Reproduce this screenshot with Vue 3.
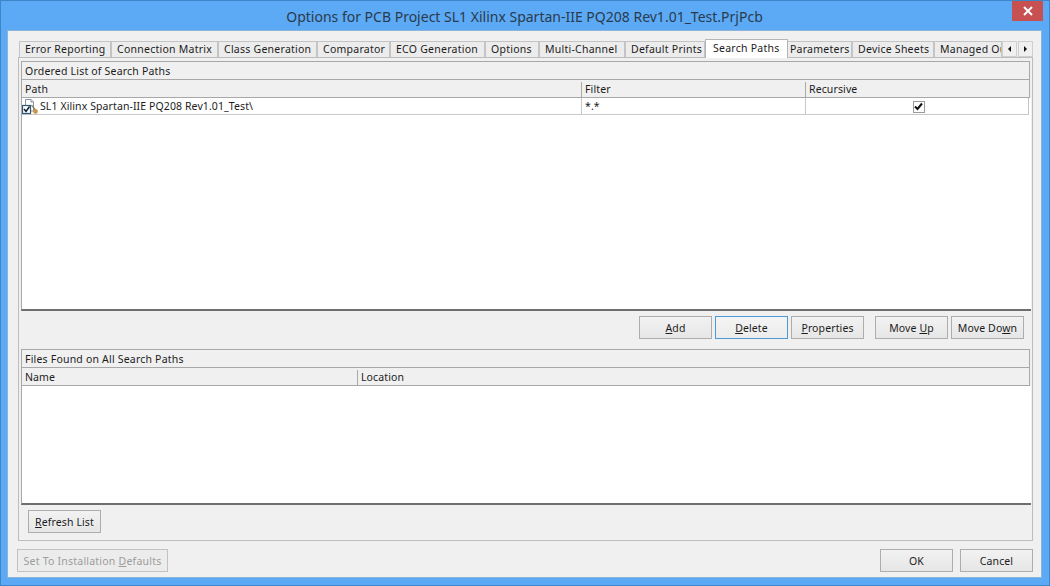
<script setup>
const tabs = [
  { label: "Error Reporting", width: 92 },
  { label: "Connection Matrix", width: 107 },
  { label: "Class Generation", width: 99 },
  { label: "Comparator", width: 73 },
  { label: "ECO Generation", width: 95 },
  { label: "Options", width: 54 },
  { label: "Multi-Channel", width: 86 },
  { label: "Default Prints", width: 80 },
  { label: "Search Paths", width: 83, active: true },
  { label: "Parameters", width: 64, afterActive: true },
  { label: "Device Sheets", width: 82 },
  { label: "Managed Output Jobs", width: 68 },
];
</script>

<template>
  <div class="window">
    <header class="titlebar">
      <span class="title">Options for PCB Project SL1 Xilinx Spartan-IIE PQ208 Rev1.01_Test.PrjPcb</span>
      <button class="close">
        <svg width="10" height="10" viewBox="0 0 10 10">
          <path d="M1 1 L9 9 M9 1 L1 9" stroke="#fff" stroke-width="2" />
        </svg>
      </button>
    </header>

    <main class="client">
      <nav class="tabs">
        <div
          v-for="tab in tabs"
          :key="tab.label"
          class="tab"
          :class="{ active: tab.active, 'after-active': tab.afterActive }"
          :style="{ width: tab.width + 'px' }"
        >
          <span>{{ tab.label }}</span>
        </div>
        <div class="scroller">
          <div class="arrow"><i class="left"></i></div>
          <div class="arrow"><i class="right"></i></div>
        </div>
      </nav>

      <section class="page">
        <div class="caption">Ordered List of Search Paths</div>
        <div class="cols paths head">
          <div class="cell">Path</div>
          <div class="cell sep">Filter</div>
          <div class="cell sep">Recursive</div>
        </div>
        <div class="list upper">
          <div class="cols paths row">
            <div class="cell path">
              <svg class="icon" width="17" height="16" viewBox="0 0 17 16">
                <path d="M3.5 .5 H9 L11.5 3 V12 H3.5 Z" fill="#fff" stroke="#8a93a0" />
                <path d="M9 .5 V3 H11.5" fill="#dfe4ea" stroke="#8a93a0" />
                <path d="M9.5 6 L13.5 11" stroke="#7d6a45" stroke-width="1.2" />
                <circle cx="13.5" cy="12.5" r="2.4" fill="#c79a4a" />
                <rect x=".5" y="6.5" width="8" height="8" fill="#fff" stroke="#2f5876" stroke-width="1.2" />
                <path d="M2 10 L4 12.5 L7.5 7.5" fill="none" stroke="#10202c" stroke-width="1.5" />
              </svg>
              <span>SL1 Xilinx Spartan-IIE PQ208 Rev1.01_Test\</span>
            </div>
            <div class="cell sep">*.*</div>
            <div class="cell sep center">
              <span class="check">
                <svg width="9" height="9" viewBox="0 0 9 9">
                  <path d="M1 4.5 L3.5 7 L8 1.5" fill="none" stroke="#111" stroke-width="2" />
                </svg>
              </span>
            </div>
          </div>
        </div>

        <div class="actions">
          <button class="btn"><u>A</u>dd</button>
          <button class="btn focus"><u>D</u>elete</button>
          <button class="btn"><u>P</u>roperties</button>
          <button class="btn gap">Move <u>U</u>p</button>
          <button class="btn">Move Do<u>w</u>n</button>
        </div>

        <div class="caption">Files Found on All Search Paths</div>
        <div class="cols files head">
          <div class="cell">Name</div>
          <div class="cell sep">Location</div>
        </div>
        <div class="list lower"></div>

        <div class="refresh">
          <button class="btn"><u>R</u>efresh List</button>
        </div>
      </section>

      <footer class="footer">
        <button class="btn wide" disabled>Set To Installation <u>D</u>efaults</button>
        <div class="confirm">
          <button class="btn">OK</button>
          <button class="btn">Cancel</button>
        </div>
      </footer>
    </main>
  </div>
</template>

<style scoped>
.window {
  width: 1050px;
  height: 586px;
  box-sizing: border-box;
  padding: 0 7px 7px 6px;
  background: #5caaf5;
  border: 1px solid #3d86c9;
  display: flex;
  flex-direction: column;
  font-family: "Noto Sans", "Open Sans", sans-serif;
  font-size: 10.5px;
  letter-spacing: 0.12px;
  color: #1c1c1c;
  overflow: hidden;
}
.titlebar {
  position: relative;
  height: 29px;
  flex: none;
  display: flex;
  align-items: center;
  justify-content: center;
}
.title {
  font-size: 14px;
  letter-spacing: 0;
  color: #2a3a4c;
  padding-top: 2px;
}
.close {
  position: absolute;
  top: -1px;
  right: -1px;
  width: 31px;
  height: 21px;
  padding: 0;
  border: 0;
  background: #c75050;
  display: flex;
  align-items: center;
  justify-content: center;
}
.client {
  flex: 1;
  display: flex;
  flex-direction: column;
  background: #f0f0f0;
  border: 1px solid #8db4d6;
  padding: 8px 9px 5px 10px;
  min-height: 0;
}
.tabs {
  height: 18px;
  flex: none;
  display: flex;
  align-items: flex-end;
  position: relative;
  z-index: 1;
  padding-left: 1px;
  letter-spacing: 0.25px;
}
.tab {
  box-sizing: border-box;
  height: 16px;
  flex: none;
  background: #ececec;
  border: 1px solid #c4c4c4;
  border-bottom: 0;
  overflow: hidden;
  white-space: nowrap;
  padding-left: 5px;
  line-height: 15px;
}
.tab.active {
  height: 19px;
  background: #fff;
  border-color: #b5b5b5;
  margin-bottom: -1px;
  line-height: 16px;
  padding-left: 7px;
}
.tab.after-active {
  border-left: 0;
  padding-left: 2px;
}
.scroller {
  position: absolute;
  left: 984px;
  bottom: 0;
  display: flex;
  gap: 1px;
}
.arrow {
  box-sizing: border-box;
  width: 15px;
  height: 16px;
  background: #f0f0f0;
  border: 1px solid #cfcfcf;
  display: flex;
  align-items: center;
  justify-content: center;
}
.arrow i {
  width: 0;
  height: 0;
  border-top: 3px solid transparent;
  border-bottom: 3px solid transparent;
}
.arrow .left {
  border-right: 3px solid #111;
}
.arrow .right {
  border-left: 3px solid #111;
}
.page {
  box-sizing: border-box;
  width: 1015px;
  height: 484px;
  flex: none;
  background: #f0f0f0;
  border: 1px solid #bdbdbd;
  padding: 3px 2px 0 2px;
  display: flex;
  flex-direction: column;
}
.caption {
  box-sizing: border-box;
  height: 19px;
  flex: none;
  background: #f0f0f0;
  border: 1px solid #a8a8a8;
  padding: 1px 0 0 3px;
  line-height: 17px;
  letter-spacing: 0.2px;
}
.cols {
  display: grid;
  flex: none;
  box-sizing: border-box;
}
.paths {
  grid-template-columns: 559px 224px 1fr;
}
.files {
  grid-template-columns: 335px 1fr;
}
.head {
  height: 18px;
  background: #f0f0f0;
  border: 1px solid #a8a8a8;
  border-top: 0;
}
.cell {
  padding-left: 3px;
  line-height: 17px;
  min-width: 0;
}
.head .cell {
  padding-top: 1px;
}
.head .sep {
  position: relative;
  padding-left: 4px;
}
.head .sep::before {
  content: "";
  position: absolute;
  left: 0;
  top: 2px;
  bottom: 1px;
  width: 1px;
  background: #a8a8a8;
}
.list {
  box-sizing: border-box;
  flex: none;
  background: #fff;
  border-left: 1px solid #a8a8a8;
  border-bottom: 2px solid #6e6e6e;
  margin-right: -1px;
}
.upper {
  height: 213px;
  padding-right: 2px;
}
.lower {
  height: 119px;
}
.row {
  height: 17px;
  border-right: 1px solid #c4c4c4;
  border-bottom: 1px solid #c9c9c9;
}
.row .sep {
  border-left: 1px solid #c9c9c9;
}
.path {
  display: flex;
  align-items: center;
  padding-left: 0;
  letter-spacing: 0.1px;
}
.icon {
  margin-right: 1px;
  flex: none;
}
.center {
  display: flex;
  align-items: center;
  justify-content: center;
}
.check {
  box-sizing: border-box;
  width: 12px;
  height: 12px;
  background: #fff;
  border: 1px solid #9a9a9a;
  display: flex;
  align-items: center;
  justify-content: center;
}
.actions {
  height: 38px;
  flex: none;
  box-sizing: border-box;
  padding: 5px 6px 0 0;
  display: flex;
  justify-content: flex-end;
  gap: 3px;
}
.btn {
  box-sizing: border-box;
  width: 73px;
  height: 23px;
  flex: none;
  padding: 0;
  background: linear-gradient(#f2f2f2, #e6e6e6);
  border: 1px solid #adadad;
  font: inherit;
  letter-spacing: inherit;
  color: #1c1c1c;
  white-space: nowrap;
}
.btn.focus {
  border-color: #4a9ad8;
  background: linear-gradient(#f4f4f4, #ececec);
}
.btn.gap {
  margin-left: 8px;
}
.refresh {
  padding: 5px 0 0 7px;
}
.footer {
  margin-top: 8px;
  display: flex;
  justify-content: space-between;
  width: 1016px;
  margin-left: -1px;
}
.wide {
  width: 151px;
  color: #9c9c9c;
  background: #ececec;
  border-color: #c2c2c2;
  letter-spacing: 0.22px;
}
.confirm {
  display: flex;
  gap: 7px;
}
</style>
